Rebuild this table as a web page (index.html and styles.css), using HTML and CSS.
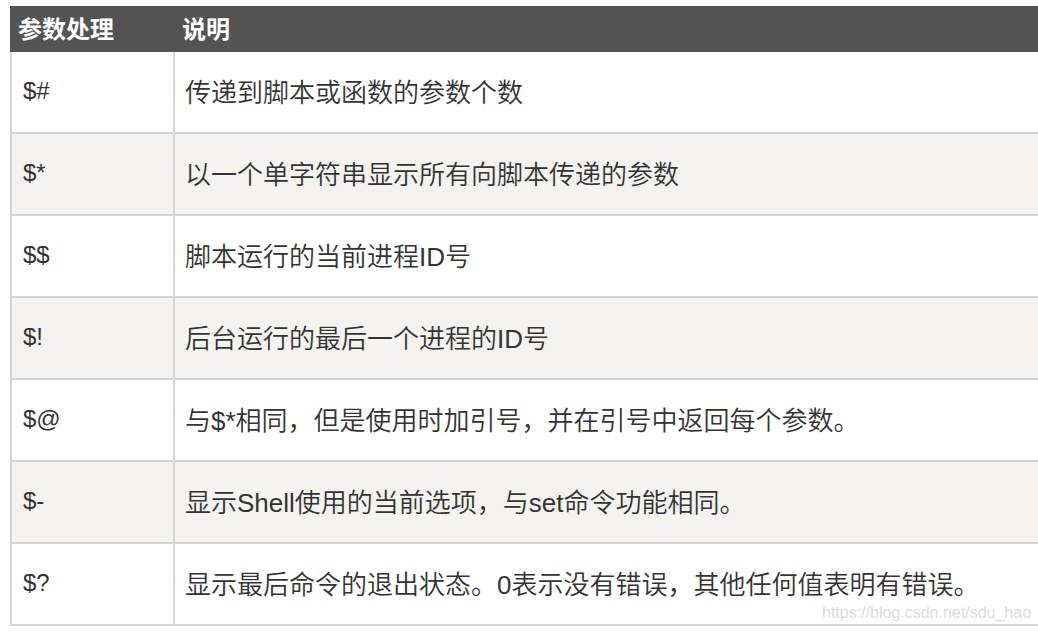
FILE: index.html
```html
<!DOCTYPE html>
<html lang="zh-CN">
<head>
<meta charset="utf-8">
<title>参数处理</title>
<link rel="stylesheet" href="styles.css">
</head>
<body>
<div class="table">
  <div class="head">
    <div class="hcell c1">参数处理</div>
    <div class="hcell c2">说明</div>
  </div>
  <div class="rows">
    <div class="row"><div class="cell k">$#</div><div class="cell v">传递到脚本或函数的参数个数</div></div>
    <div class="row alt"><div class="cell k">$*</div><div class="cell v">以一个单字符串显示所有向脚本传递的参数</div></div>
    <div class="row"><div class="cell k">$$</div><div class="cell v">脚本运行的当前进程ID号</div></div>
    <div class="row alt"><div class="cell k">$!</div><div class="cell v">后台运行的最后一个进程的ID号</div></div>
    <div class="row"><div class="cell k">$@</div><div class="cell v">与$*相同，但是使用时加引号，并在引号中返回每个参数。</div></div>
    <div class="row alt"><div class="cell k">$-</div><div class="cell v">显示Shell使用的当前选项，与set命令功能相同。</div></div>
    <div class="row"><div class="cell k">$?</div><div class="cell v">显示最后命令的退出状态。0表示没有错误，其他任何值表明有错误。</div></div>
  </div>
</div>
<div class="watermark">https://blog.csdn.net/sdu_hao</div>
</body>
</html>
```
FILE: styles.css
```css
html, body {
  margin: 0;
  padding: 0;
  background: #ffffff;
  overflow: hidden;
}
body {
  width: 1038px;
  height: 632px;
  position: relative;
  font-family: "Liberation Sans", "Noto Sans CJK SC", sans-serif;
  color: #333333;
}
.table {
  margin: 6px 0 0 10px;
  width: 1060px;
}
.head {
  display: grid;
  grid-template-columns: 165px 1fr;
  height: 46px;
  background: #545454;
  color: #ffffff;
  font-family: "Noto Sans CJK SC", sans-serif;
  font-weight: 700;
  font-size: 24px;
}
.hcell {
  display: flex;
  align-items: center;
  padding-bottom: 3px;
}
.hcell.c1 { padding-left: 8px; }
.hcell.c2 { padding-left: 7px; }
.rows {
  border-left: 2px solid #d5d5d5;
}
.row {
  display: grid;
  grid-template-columns: 161px 1fr;
  height: 82px;
  box-sizing: border-box;
  border-bottom: 2px solid #d5d5d5;
  background: #ffffff;
  font-size: 26px;
  font-weight: 350;
}
.row.alt {
  background: #f4f3f0;
}
.cell {
  display: flex;
  align-items: center;
  white-space: nowrap;
  padding-bottom: 3px;
}
.cell.k {
  padding-left: 11px;
  font-size: 24px;
}
.cell.v {
  border-left: 2px solid #d5d5d5;
  padding-left: 10px;
}
.watermark {
  position: absolute;
  left: 822px;
  top: 604px;
  font-family: "Liberation Sans", sans-serif;
  font-size: 16px;
  color: #dcdcdc;
}
```
